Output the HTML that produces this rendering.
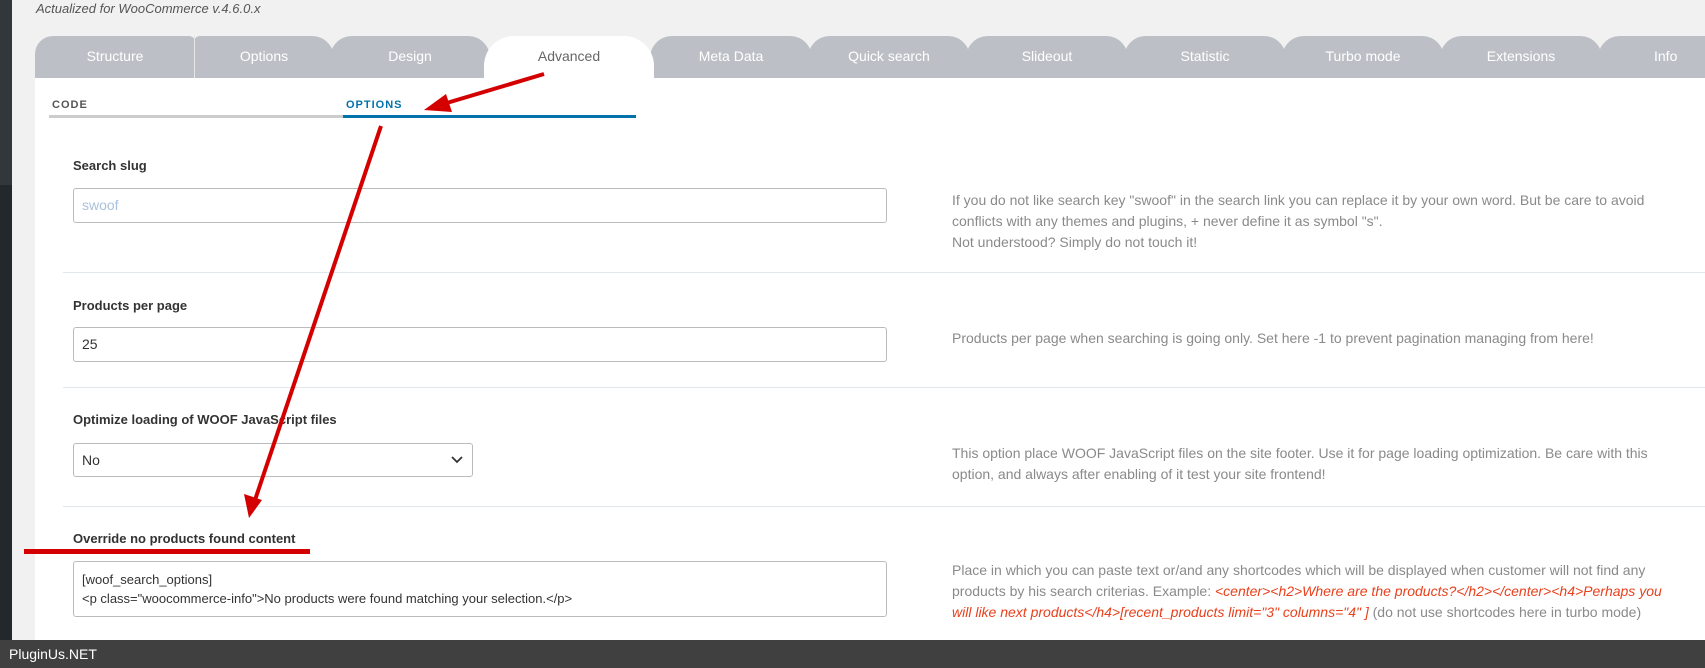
<!DOCTYPE html>
<html><head><meta charset="utf-8"><style>
*{margin:0;padding:0;box-sizing:border-box}
body{width:1705px;height:668px;position:relative;overflow:hidden;background:#f1f1f1;font-family:"Liberation Sans",sans-serif}
.abs{position:absolute}
.side{left:0;top:0;width:12px;height:640px;background:#23282d}
.side2{left:0;top:0;width:12px;height:185px;background:#32373c}
.panel{left:35px;top:78px;width:1670px;height:562px;background:#fff}
.tab{position:absolute;top:36px;height:42px;background:#bcc0c6;border-radius:22px 22px 0 0;color:#fff;font-size:14px;text-align:center;line-height:41px}
.tab.act{background:#fff;color:#666;z-index:2}
.lbl{position:absolute;left:73px;font-size:13px;font-weight:bold;color:#333}
.inp{position:absolute;left:73px;width:814px;border:1px solid #bbb;border-radius:3px;background:#fff;font-size:14px;color:#333;padding-left:8px}
.desc{position:absolute;left:952px;width:735px;font-size:14px;line-height:21px;color:#8a8a8a}
.sep{position:absolute;left:63px;right:0;height:1px;background:#e2e7ec}
.red{color:#e8401c;font-style:italic}
</style></head><body>
<div class="abs side"></div><div class="abs side2"></div>
<div class="abs" style="left:36px;top:1px;font-size:13px;font-style:italic;color:#555">Actualized for WooCommerce v.4.6.0.x</div>
<div class="abs panel"></div>
<div class="tab" style="left:35px;width:160px;border-radius:18px 6px 0 0">Structure</div>
<div class="abs" style="left:194px;top:36px;width:1px;height:42px;background:#e6e6e6;z-index:3"></div>
<div class="tab" style="left:194px;width:140px;border-radius:6px 22px 0 0">Options</div>
<div class="tab" style="left:330px;width:160px">Design</div>
<div class="tab act" style="left:484px;width:170px;border-radius:30px 30px 0 0">Advanced</div>
<div class="tab" style="left:650px;width:162px">Meta Data</div>
<div class="tab" style="left:808px;width:162px">Quick search</div>
<div class="tab" style="left:966px;width:162px">Slideout</div>
<div class="tab" style="left:1124px;width:162px">Statistic</div>
<div class="tab" style="left:1282px;width:162px">Turbo mode</div>
<div class="tab" style="left:1440px;width:162px">Extensions</div>
<div class="tab" style="left:1598px;width:150px;text-align:left;padding-left:56px">Info</div>

<div class="abs" style="left:52px;top:99px;font-size:11px;font-weight:bold;letter-spacing:1px;color:#555">CODE</div>
<div class="abs" style="left:346px;top:99px;font-size:11px;font-weight:bold;letter-spacing:1px;color:#0073aa">OPTIONS</div>
<div class="abs" style="left:49px;top:115px;width:294px;height:3px;background:#ccc"></div>
<div class="abs" style="left:343px;top:115px;width:293px;height:3px;background:#0073aa"></div>

<div class="lbl" style="top:158px">Search slug</div>
<div class="inp" style="top:188px;height:35px;line-height:33px;color:#a9c2dc">swoof</div>
<div class="desc" style="top:190px">If you do not like search key "swoof" in the search link you can replace it by your own word. But be care to avoid conflicts with any themes and plugins, + never define it as symbol "s".<br>Not understood? Simply do not touch it!</div>
<div class="sep" style="top:272px"></div>

<div class="lbl" style="top:298px">Products per page</div>
<div class="inp" style="top:327px;height:35px;line-height:33px">25</div>
<div class="desc" style="top:328px">Products per page when searching is going only. Set here -1 to prevent pagination managing from here!</div>
<div class="sep" style="top:387px"></div>

<div class="lbl" style="top:412px">Optimize loading of WOOF JavaScript files</div>
<div class="inp" style="top:443px;height:34px;line-height:32px;width:400px">No
<svg style="position:absolute;right:9px;top:12px" width="12" height="8" viewBox="0 0 12 8"><path d="M1 1l5 5 5-5" fill="none" stroke="#333" stroke-width="1.8"/></svg></div>
<div class="desc" style="top:443px">This option place WOOF JavaScript files on the site footer. Use it for page loading optimization. Be care with this option, and always after enabling of it test your site frontend!</div>
<div class="sep" style="top:506px"></div>

<div class="lbl" style="top:531px">Override no products found content</div>
<div class="abs" style="left:24px;top:549px;width:286px;height:5px;background:#d40000"></div>
<div class="inp" style="top:561px;height:56px;font-size:13px;line-height:19px;padding-top:8px">[woof_search_options]<br>&lt;p class="woocommerce-info"&gt;No products were found matching your selection.&lt;/p&gt;</div>
<div class="desc" style="top:560px;line-height:21px">Place in which you can paste text or/and any shortcodes which will be displayed when customer will not find any products by his search criterias. Example: <span class="red">&lt;center&gt;&lt;h2&gt;Where are the products?&lt;/h2&gt;&lt;/center&gt;&lt;h4&gt;Perhaps you<br>will like next products&lt;/h4&gt;[recent_products limit="3" columns="4" ]</span> (do not use shortcodes here in turbo mode)</div>

<div class="abs" style="left:0;top:640px;width:1705px;height:28px;background:#404040;color:#fff;font-size:14px;line-height:28px;padding-left:9px">PluginUs.NET</div>

<svg class="abs" style="left:0;top:0;z-index:5" width="1705" height="668">
<line x1="544" y1="74" x2="440" y2="105" stroke="#d40000" stroke-width="4"/>
<polygon points="424,110 446,94 452,112" fill="#d40000"/>
<line x1="381" y1="126" x2="255" y2="500" stroke="#d40000" stroke-width="4"/>
<polygon points="249,518 244,494 262,500" fill="#d40000"/>
</svg>
</body></html>
